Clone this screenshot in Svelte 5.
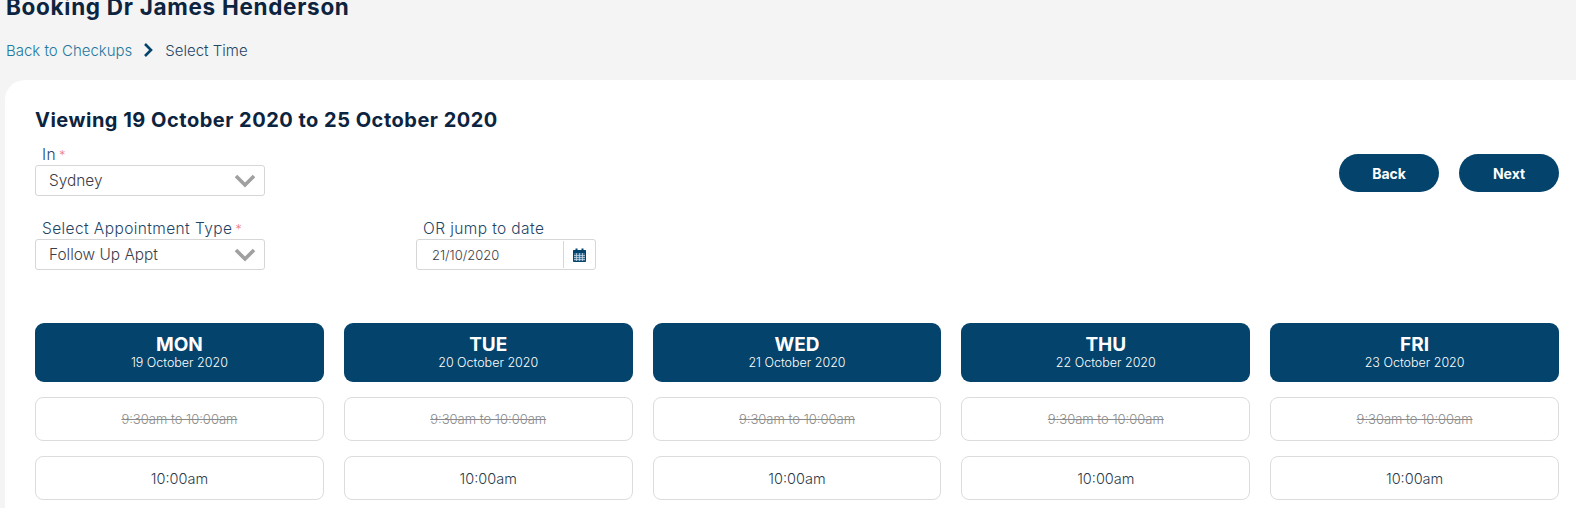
<script>
	const days = [
		{ name: 'MON', date: '19 October 2020' },
		{ name: 'TUE', date: '20 October 2020' },
		{ name: 'WED', date: '21 October 2020' },
		{ name: 'THU', date: '22 October 2020' },
		{ name: 'FRI', date: '23 October 2020' }
	];
</script>

<div class="page">
	<h1>Booking Dr James Henderson</h1>
	<nav class="crumbs">
		<a href="#back">Back to Checkups</a>
		<svg class="crumb-sep" width="10" height="16" viewBox="0 0 10 16" aria-hidden="true">
			<path d="M2 2 L8 8 L2 14" fill="none" stroke="#03436c" stroke-width="2.6" />
		</svg>
		<span>Select Time</span>
	</nav>

	<main class="card">
		<h2>Viewing 19 October 2020 to 25 October 2020</h2>

		<div class="top">
			<div class="filters">
				<div class="field">
					<div class="label">In<span class="req">*</span></div>
					<div class="select">
						<span>Sydney</span>
						<svg width="24" height="14" viewBox="0 0 24 14" aria-hidden="true">
							<path d="M3 2 L12 11 L21 2" fill="none" stroke="#a0a0a0" stroke-width="3.6" />
						</svg>
					</div>
				</div>
				<div class="row">
					<div class="field">
						<div class="label">Select Appointment Type<span class="req">*</span></div>
						<div class="select">
							<span>Follow Up Appt</span>
							<svg width="24" height="14" viewBox="0 0 24 14" aria-hidden="true">
								<path d="M3 2 L12 11 L21 2" fill="none" stroke="#a0a0a0" stroke-width="3.6" />
							</svg>
						</div>
					</div>
					<div class="field date-field">
						<div class="label">OR jump to date</div>
						<div class="date">
							<span class="date-value">21/10/2020</span>
							<span class="date-btn">
								<svg width="13" height="14" viewBox="0 0 13 14" aria-hidden="true">
									<path
										d="M0.5 2.5 H12.5 V13.5 H0.5 Z"
										fill="#2f6a90"
										stroke="#03436c"
										stroke-width="1"
									/>
									<rect x="0.5" y="2" width="12" height="3" fill="#03436c" />
									<rect x="2.5" y="0.5" width="2" height="3" fill="#03436c" />
									<rect x="8.5" y="0.5" width="2" height="3" fill="#03436c" />
									<path
										d="M1 7.5 H12 M1 9.5 H12 M1 11.5 H12 M3.5 5 V13 M6.5 5 V13 M9.5 5 V13"
										stroke="#cfdde6"
										stroke-width="0.7"
									/>
								</svg>
							</span>
						</div>
					</div>
				</div>
			</div>
			<div class="actions">
				<button>Back</button>
				<button>Next</button>
			</div>
		</div>

		<div class="days">
			{#each days as day}
				<section class="day">
					<header>
						<div class="day-name">{day.name}</div>
						<div class="day-date">{day.date}</div>
					</header>
					<div class="slot taken"><s>9:30am to 10:00am</s></div>
					<div class="slot">10:00am</div>
				</section>
			{/each}
		</div>
	</main>
</div>

<style>
	:global(body) {
		margin: 0;
		background: #f4f4f4;
		overflow: hidden;
	}

	.page {
		height: 508px;
		overflow: hidden;
		font-family: Inter, 'Noto Sans', sans-serif;
		color: #1f4566;
		box-sizing: border-box;
	}

	h1 {
		margin: -6px 0 0 6px;
		font-size: 22.5px;
		line-height: 26px;
		font-weight: 700;
		color: #0d2440;
		letter-spacing: 0.7px;
	}

	.crumbs {
		display: flex;
		align-items: center;
		margin: 20px 0 0 6px;
		height: 20px;
		font-size: 15px;
		font-weight: 300;
	}

	.crumbs a {
		color: #23799f;
		text-decoration: none;
	}

	.crumb-sep {
		margin: 0 12px 0 11px;
	}

	.card {
		margin: 20px 0 0 5px;
		padding: 27px 17px 0 30px;
		height: 440px;
		box-sizing: border-box;
		background: #fff;
		border-radius: 20px 0 0 0;
	}

	h2 {
		margin: 0;
		font-size: 20px;
		line-height: 26px;
		font-weight: 700;
		color: #0d2440;
		letter-spacing: 0.5px;
	}

	.top {
		display: flex;
		justify-content: space-between;
		align-items: flex-start;
		height: 179px;
		margin-top: 11px;
	}

	.filters {
		display: flex;
		flex-direction: column;
		gap: 22px;
	}

	.row {
		display: flex;
		gap: 151px;
	}

	.field {
		width: 230px;
	}

	.date-field {
		width: 180px;
	}

	.label {
		height: 21px;
		padding-left: 7px;
		font-size: 15.5px;
		line-height: 22px;
		font-weight: 300;
		letter-spacing: 0.4px;
		white-space: nowrap;
	}

	.req {
		color: #ee7f86;
		margin-left: 3px;
		font-size: 13px;
	}

	.select,
	.date {
		display: flex;
		align-items: center;
		justify-content: space-between;
		height: 31px;
		box-sizing: border-box;
		border: 1px solid #d6d6d6;
		border-radius: 3px;
		background: #fff;
		font-size: 15.4px;
		font-weight: 300;
		color: #3c3c46;
	}

	.select {
		padding: 0 7px 0 13px;
	}

	.date {
		padding-left: 15px;
		font-size: 13px;
	}

	.date-btn {
		display: flex;
		align-items: center;
		justify-content: center;
		width: 31px;
		height: 27px;
		border-left: 1px solid #d6d6d6;
	}

	.actions {
		display: flex;
		gap: 20px;
		margin-top: 10px;
	}

	button {
		width: 100px;
		height: 38px;
		border: none;
		border-radius: 19px;
		background: #03436c;
		color: #fff;
		font-family: inherit;
		font-size: 14px;
		font-weight: 700;
	}

	.days {
		display: grid;
		grid-template-columns: repeat(5, 1fr);
		gap: 20px;
	}

	.day {
		display: flex;
		flex-direction: column;
		gap: 15px;
	}

	header {
		height: 59px;
		box-sizing: border-box;
		padding-top: 11px;
		border-radius: 9px;
		background: #03436c;
		color: #fff;
		text-align: center;
	}

	.day-name {
		font-size: 19px;
		line-height: 21px;
		font-weight: 700;
	}

	.day-date {
		font-size: 12.5px;
		line-height: 16px;
		font-weight: 300;
	}

	.slot {
		display: flex;
		align-items: center;
		justify-content: center;
		height: 44px;
		box-sizing: border-box;
		border: 1px solid #dcdcdc;
		border-radius: 8px;
		font-size: 14.5px;
		font-weight: 300;
		color: #2a3a4a;
	}

	.taken {
		font-size: 13px;
		color: #8a8a8a;
	}
</style>
